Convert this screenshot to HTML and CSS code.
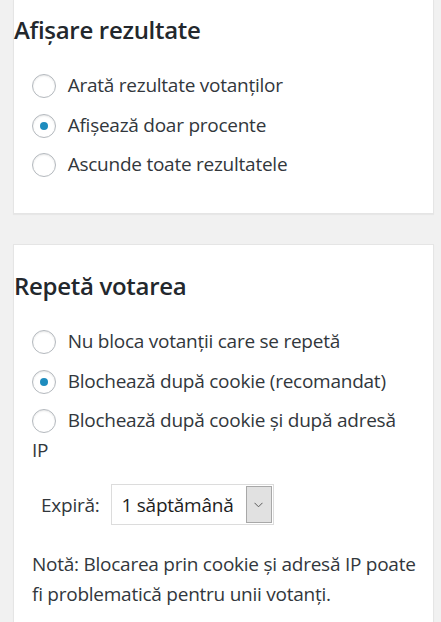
FILE: index.html
```html
<!DOCTYPE html>
<html lang="ro">
<head>
<meta charset="utf-8">
<title>Setări vot</title>
<link rel="stylesheet" href="styles.css">
</head>
<body>
<div class="page">
  <section class="card card-first">
    <h2 class="card-title">Afișare rezultate</h2>
    <div class="options">
      <label class="option"><input type="radio" name="results" class="radio"> Arată rezultate votanților</label>
      <label class="option"><input type="radio" name="results" class="radio" checked> Afișează doar procente</label>
      <label class="option"><input type="radio" name="results" class="radio"> Ascunde toate rezultatele</label>
    </div>
  </section>

  <section class="card card-second">
    <h2 class="card-title">Repetă votarea</h2>
    <div class="options">
      <label class="option"><input type="radio" name="repeat" class="radio"> Nu bloca votanții care se repetă</label>
      <label class="option"><input type="radio" name="repeat" class="radio" checked> Blochează după cookie (recomandat)</label>
      <label class="option"><input type="radio" name="repeat" class="radio"> Blochează după cookie și după adresă IP</label>
    </div>
    <div class="expire">
      <span class="expire-label">Expiră:</span>
      <div class="select">
        <span class="select-value">1 săptămână</span>
        <span class="select-button">
          <svg width="9" height="6" viewBox="0 0 9 6"><polyline points="0.5,0.8 4.5,4.8 8.5,0.8" fill="none" stroke="#5a5a5a" stroke-width="1"/></svg>
        </span>
      </div>
    </div>
    <p class="note">Notă: Blocarea prin cookie și adresă IP poate fi problematică pentru unii votanți.</p>
  </section>
</div>
</body>
</html>
```

FILE: styles.css
```css
html, body {
  margin: 0;
  padding: 0;
  background: #f1f1f1;
}

body {
  font-family: "Open Sans", "Noto Sans", sans-serif;
  color: #32373c;
}

.page {
  display: flex;
  flex-direction: column;
  gap: 30px;
  padding: 0 7px 0 13px;
}

.card {
  background: #fff;
  border: 1px solid #e5e5e5;
  box-shadow: 0 1px 1px rgba(0, 0, 0, 0.04);
}

.card-first {
  border-top: none;
  padding-bottom: 34px;
}

.card-second {
  padding-bottom: 30px;
}

.card-title {
  margin: 0;
  font-size: 24px;
  font-weight: 600;
  color: #23282d;
  letter-spacing: -0.3px;
  line-height: 30px;
}

.card-first .card-title {
  padding-top: 15px;
}

.card-second .card-title {
  padding-top: 26px;
}

.options {
  display: flex;
  flex-direction: column;
  gap: 9.5px;
  padding: 0 17px 0 18px;
  margin-top: 25px;
}

.option {
  display: block;
  font-size: 19px;
  letter-spacing: -0.25px;
  line-height: 30px;
}

.radio {
  -webkit-appearance: none;
  appearance: none;
  width: 24px;
  height: 24px;
  margin: 0 7px 0 0;
  border: 1px solid #b4b9be;
  border-radius: 50%;
  background: #fff;
  box-shadow: inset 0 1px 2px rgba(0, 0, 0, 0.1);
  vertical-align: -6px;
  position: relative;
  box-sizing: border-box;
}

.radio:checked::before {
  content: "";
  position: absolute;
  left: 7px;
  top: 7px;
  width: 8px;
  height: 8px;
  border-radius: 50%;
  background: #1e8cbe;
}

.expire {
  display: flex;
  align-items: center;
  gap: 11px;
  margin: 19px 0 0 27px;
}

.expire-label {
  font-size: 19px;
  letter-spacing: -0.25px;
}

.select {
  display: flex;
  align-items: stretch;
  height: 41px;
  width: 163px;
  box-sizing: border-box;
  border: 1px solid #dcdcdc;
  background: #fff;
  padding: 1px;
}

.select-value {
  flex: 1;
  display: flex;
  align-items: center;
  padding-left: 9px;
  font-size: 19px;
  letter-spacing: -0.25px;
  color: #1e1e1e;
}

.select-button {
  width: 26px;
  box-sizing: border-box;
  border: 1px solid #a8a8a8;
  background: #e1e1e1;
  display: flex;
  align-items: center;
  justify-content: center;
}

.note {
  margin: 24px 17px 0 18px;
  font-size: 19px;
  letter-spacing: -0.25px;
  line-height: 30px;
}
```
